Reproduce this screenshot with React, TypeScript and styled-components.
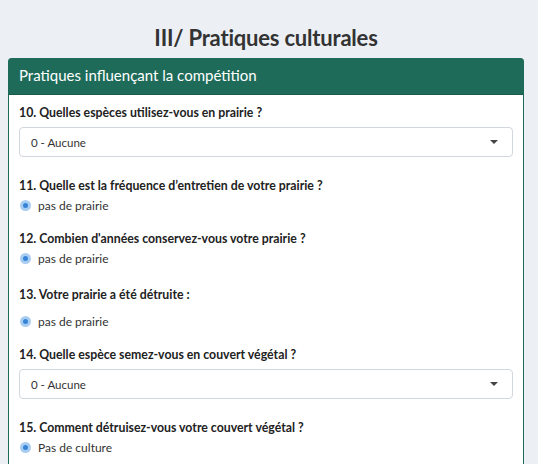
import * as React from 'react'
import styled, { createGlobalStyle } from 'styled-components'

const GlobalStyle = createGlobalStyle`
  body {
    margin: 0;
    background: #ecf0f5;
    font-family: 'Lato', 'Noto Sans', sans-serif;
    color: #333;
  }
`

type Question =
  | { kind: 'select'; label: string; value: string }
  | { kind: 'radio'; label: string; value: string; spaced?: boolean }

const questions: Question[] = [
  { kind: 'select', label: '10. Quelles espèces utilisez-vous en prairie ?', value: '0 - Aucune' },
  { kind: 'radio', label: '11. Quelle est la fréquence d’entretien de votre prairie ?', value: 'pas de prairie' },
  { kind: 'radio', label: "12. Combien d'années conservez-vous votre prairie ?", value: 'pas de prairie' },
  { kind: 'radio', label: '13. Votre prairie a été détruite :', value: 'pas de prairie', spaced: true },
  { kind: 'select', label: '14. Quelle espèce semez-vous en couvert végétal ?', value: '0 - Aucune' },
  { kind: 'radio', label: '15. Comment détruisez-vous votre couvert végétal ?', value: 'Pas de culture' },
]

const App: React.FC = () => {
  return (
    <Page>
      <GlobalStyle />
      <Title>III/ Pratiques culturales</Title>
      <Card>
        <CardHeader>Pratiques influençant la compétition</CardHeader>
        <CardBody>
          {questions.map((q) => (
            <Field key={q.label} $kind={q.kind} $spaced={q.kind === 'radio' && !!q.spaced}>
              <Label $kind={q.kind}>{q.label}</Label>
              {q.kind === 'select' ? (
                <Select>
                  <span>{q.value}</span>
                  <Caret />
                </Select>
              ) : (
                <RadioRow $spaced={!!q.spaced}>
                  <RadioDot />
                  <RadioText>{q.value}</RadioText>
                </RadioRow>
              )}
            </Field>
          ))}
        </CardBody>
      </Card>
    </Page>
  )
}

export default App

const Page = styled.div`
  padding: 0 14px 0 8px;
`

const Title = styled.h1`
  margin: 0;
  padding-top: 24px;
  height: 34px;
  text-align: center;
  font-size: 22px;
  font-weight: 700;
  color: #333;
  line-height: 28px;
  letter-spacing: -0.2px;
`

const Card = styled.div`
  border: 1px solid #1e6b5a;
  border-radius: 3px 3px 0 0;
  background: #fff;
  height: 420px;
`

const CardHeader = styled.div`
  background: #1e6b5a;
  color: #fff;
  font-size: 15px;
  height: 35px;
  line-height: 33px;
  padding: 0 10px;
  border-bottom: 1px solid #185a4b;
`

const CardBody = styled.div`
  padding: 9px 10px 0;
  display: flex;
  flex-direction: column;
`

const Field = styled.div<{ $kind: string; $spaced: boolean }>`
  display: flex;
  flex-direction: column;
  margin-top: ${(p) => (p.$spaced ? '3px' : '0')};
  margin-bottom: ${(p) => (p.$kind === 'select' ? '20px' : '17px')};
`

const Label = styled.div<{ $kind: string }>`
  font-size: 12.3px;
  font-weight: 700;
  color: #222;
  line-height: 18px;
  margin-bottom: ${(p) => (p.$kind === 'select' ? '5px' : '2px')};
`

const Select = styled.div`
  height: 30px;
  box-sizing: border-box;
  border: 1px solid #d2d6de;
  border-radius: 4px;
  display: flex;
  align-items: center;
  justify-content: space-between;
  padding: 0 14px 0 11px;
  font-size: 11.5px;
  color: #333;
`

const Caret = styled.span`
  width: 0;
  height: 0;
  border-left: 4px solid transparent;
  border-right: 4px solid transparent;
  border-top: 4px solid #444;
`

const RadioRow = styled.div<{ $spaced: boolean }>`
  display: flex;
  align-items: center;
  gap: 7px;
  padding-left: 1px;
  margin-top: ${(p) => (p.$spaced ? '7px' : '0')};
  height: 16px;
`

const RadioDot = styled.span`
  width: 11px;
  height: 11px;
  border-radius: 50%;
  box-sizing: border-box;
  background: #3584d8;
  border: 3px solid #a8cdf1;
`

const RadioText = styled.span`
  font-size: 12px;
  color: #333;
`
